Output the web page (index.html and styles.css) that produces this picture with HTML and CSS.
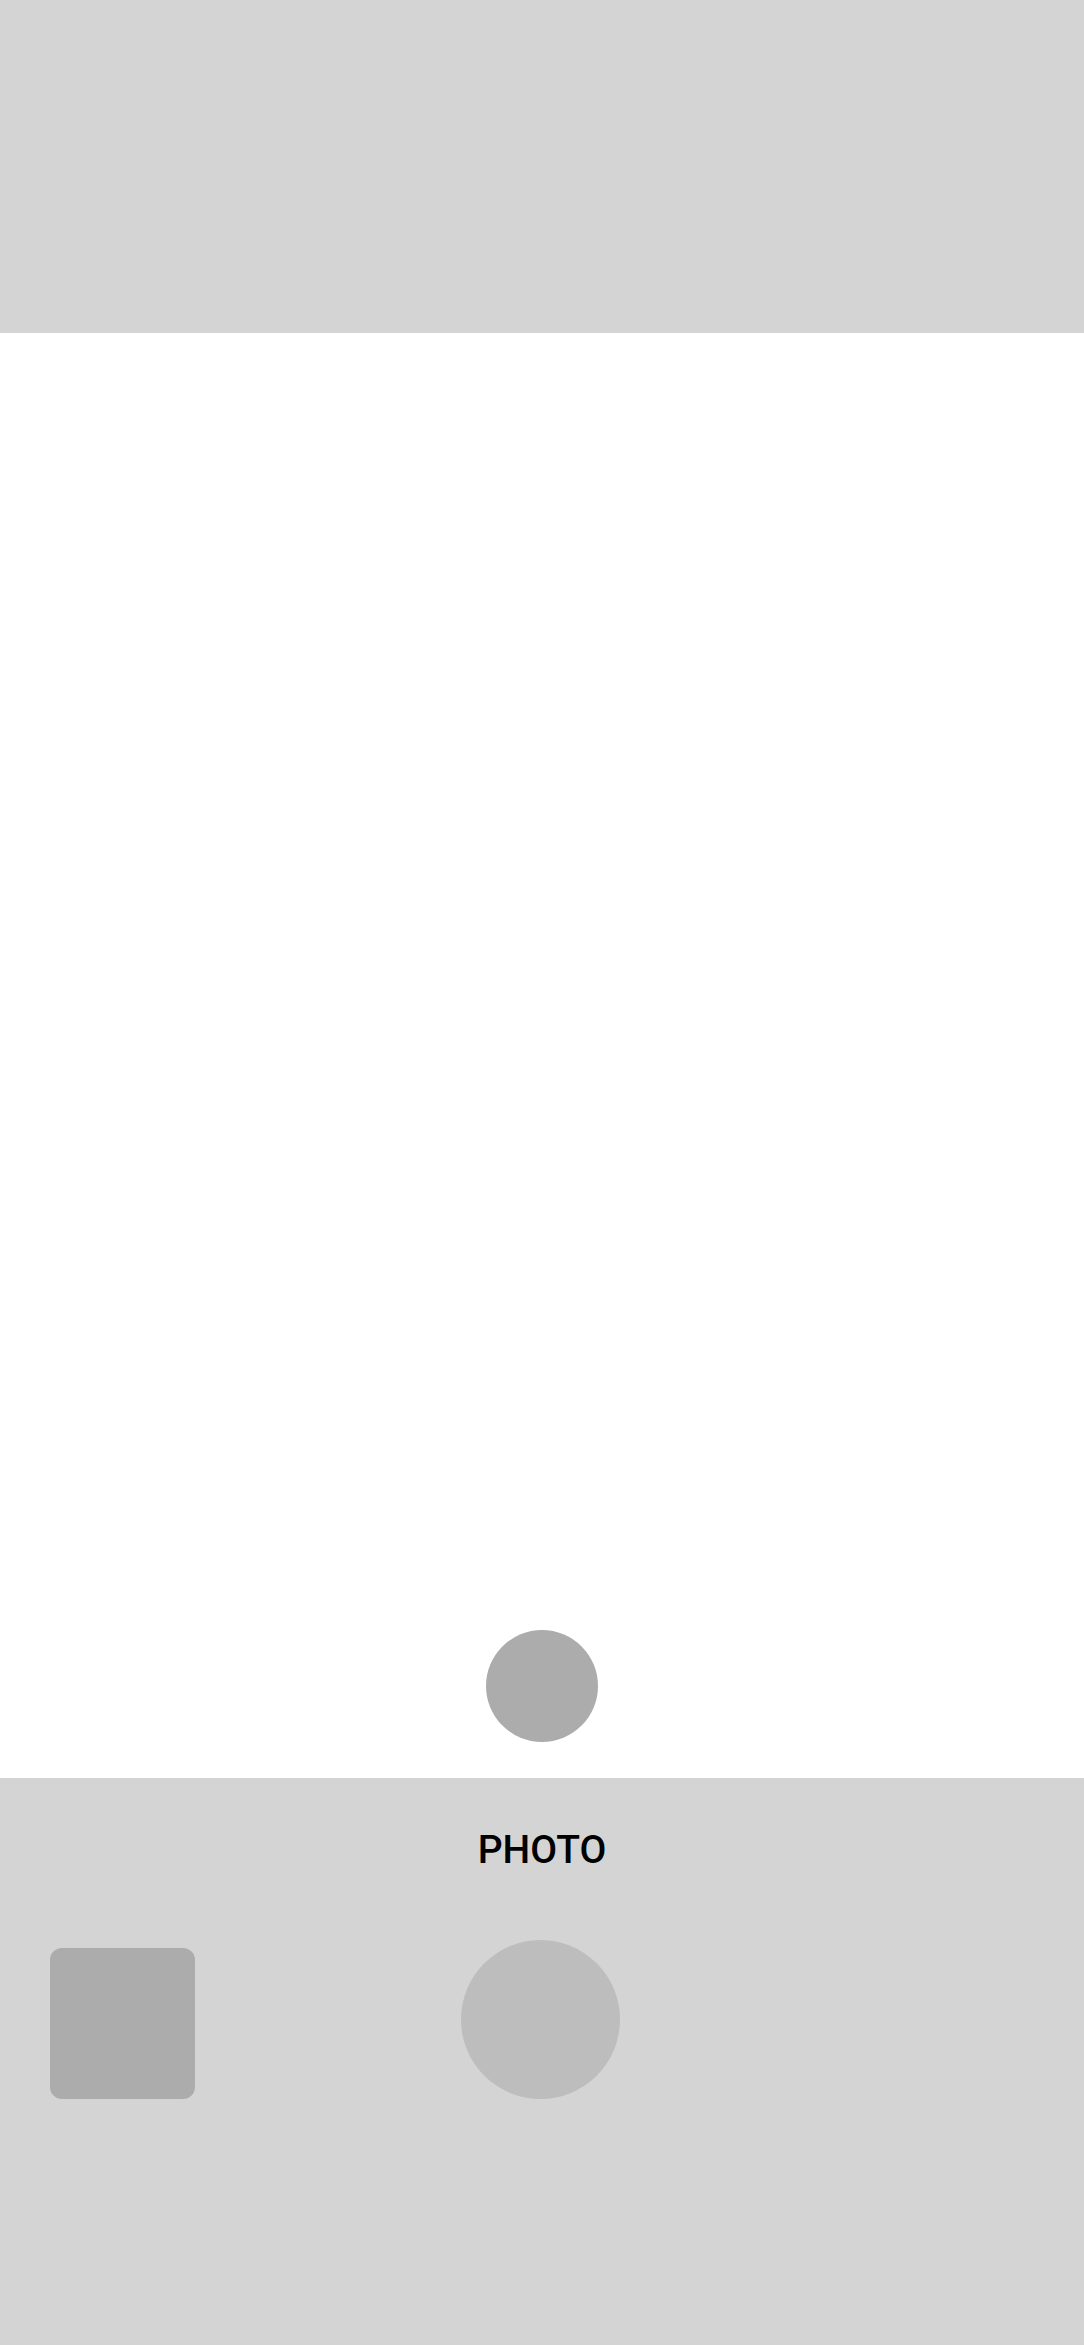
FILE: index.html
```html
<!DOCTYPE html>
<html>
<head>
<meta charset="utf-8">
<link rel="stylesheet" href="styles.css">
</head>
<body>
<div class="app">
  <header class="top"></header>
  <main class="viewfinder">
    <div class="switch-btn"></div>
  </main>
  <section class="controls">
    <div class="mode">PHOTO</div>
    <div class="row">
      <div class="thumb"></div>
      <div class="shutter"></div>
      <div class="spacer"></div>
    </div>
  </section>
</div>
</body>
</html>
```
FILE: styles.css
```css
html, body {
  margin: 0;
  padding: 0;
  background: #ffffff;
}
.app {
  width: 1084px;
  height: 2345px;
  display: flex;
  flex-direction: column;
}
.top {
  height: 333px;
  background: #d4d4d4;
  flex: none;
}
.viewfinder {
  flex: 1;
  display: flex;
  flex-direction: column;
  justify-content: flex-end;
  align-items: center;
  padding-bottom: 36px;
  background: #ffffff;
}
.switch-btn {
  width: 112px;
  height: 112px;
  border-radius: 50%;
  background: #acacac;
}
.controls {
  height: 567px;
  flex: none;
  background: #d4d4d4;
  display: flex;
  flex-direction: column;
}
.mode {
  font-family: Roboto, "Liberation Sans", sans-serif;
  font-size: 39px;
  font-weight: 500;
  line-height: 48px;
  color: #000;
  text-align: center;
  margin-top: 48px;
}
.row {
  display: grid;
  grid-template-columns: 1fr auto 1fr;
  align-items: center;
  padding: 0 53px 0 50px;
  margin-top: 66px;
}
.thumb {
  width: 145px;
  height: 151px;
  border-radius: 12px;
  background: #acacac;
  justify-self: start;
  margin-top: 8px;
}
.shutter {
  width: 159px;
  height: 159px;
  border-radius: 50%;
  background: #bdbdbd;
}
```
